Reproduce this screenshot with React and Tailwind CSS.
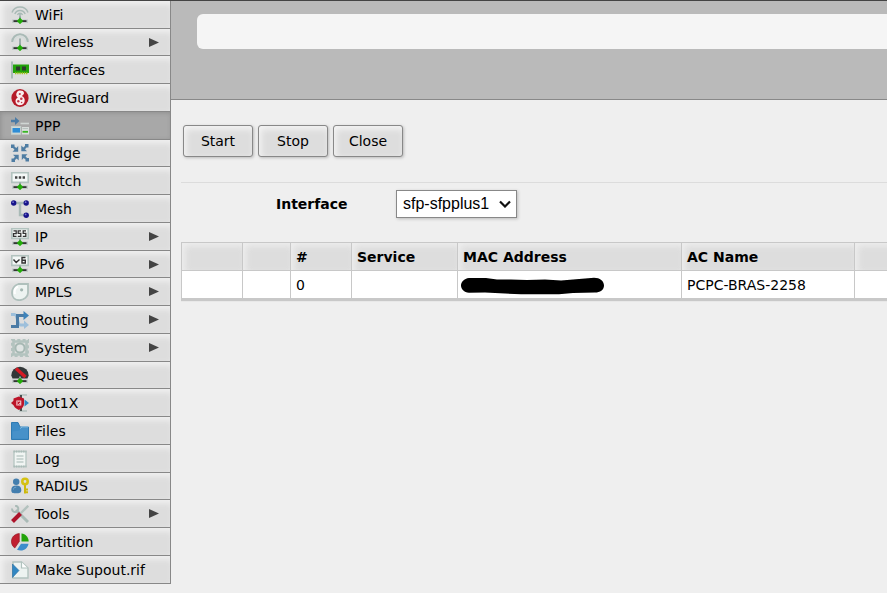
import React from 'react';

const Plug = () => (
  <g>
    <path d="M1 13.5h16v3.500h-16z" fill="#9db0ac" opacity=".45" />
    <path d="M2.500 14.200h13v1.800h-13z" fill="#333" />
    <path d="M8 10.500h2v2.500h-2z" fill="#8fa39f" />
    <path d="M9 11.800l3.200 3.200-3.200 3.200-3.200-3.200z" fill="#22ad08" />
  </g>
);

const Screen = ({ children }) => (
  <g>
    <path d="M.8.8h16.4v9.6h-16.4z" fill="#f4f8f7" stroke="#b3c3bf" strokeWidth="1.6" />
    {children}
    <Plug />
  </g>
);

const icons = {
  wifi: (
    <g>
      <g fill="none" stroke="#a9bab6" strokeWidth="1.400">
        <path d="M1 6.500a8.600 8.600 0 0 1 16 0" />
        <path d="M3.800 8a5.600 5.600 0 0 1 10.400 0" />
        <path d="M6.500 9a2.700 2.700 0 0 1 5 0" />
        <path d="M9 8v5" strokeWidth="1.800" />
      </g>
      <Plug />
    </g>
  ),
  wireless: (
    <g>
      <path d="M1.200 9a7.800 7.800 0 0 1 15.600 0" fill="none" stroke="#a9bab6" strokeWidth="2" />
      <path d="M3.500 9a5.500 5.500 0 0 1 11 0" fill="none" stroke="#d3dcda" strokeWidth="1.400" />
      <path d="M8 5.500h2v7h-2z" fill="#9caeaa" />
      <Plug />
    </g>
  ),
  interfaces: (
    <g>
      <path d="M1 .5v17" stroke="#a9bab6" strokeWidth="2" />
      <path d="M2 3.500h16v8.500h-16z" fill="#22a30a" />
      <path d="M5 5.500h4v4h-4zM11 5.500h4v4h-4z" fill="#2e3b2e" />
      <path d="M4 12.300h13" stroke="#9fc41c" strokeWidth="2" strokeDasharray="1.400 .8" />
    </g>
  ),
  wireguard: (
    <g>
      <ellipse cx="9" cy="9" rx="8.600" ry="8.900" fill="#b51a28" />
      <path
        d="M7 2c2.500-1 6-.4 6 2 0 1.600-1.400 2.400-2.300 3 2 .8 3 2.400 3 4.500 0 3-2.200 4.700-4.700 4.700-2.700 0-4.500-1.700-4.500-4 0-1.800.9-3 2.300-3.800-1.300-1-1.800-2-1.500-3.400.3-1.400 1-2.500 1.700-3z"
        fill="#f9edee"
      />
      <circle cx="8.800" cy="5" r="1.100" fill="#c3394a" />
      <circle cx="10.300" cy="9.800" r="1.300" fill="#c3394a" />
      <circle cx="7.300" cy="12.300" r="1.200" fill="#c3394a" />
      <circle cx="10.600" cy="13.500" r=".8" fill="#c3394a" />
    </g>
  ),
  ppp: (
    <g>
      <path d="M0 2.800h4v-2.800l4.500 4-4.500 4v-2.800h-4z" fill="#4b7ba5" />
      <path d="M9.500 6.500h8.500" stroke="#d0d6d4" strokeWidth="1.600" />
      <path d="M.6 9.600h9v7.600h-9z" fill="#d5dcda" stroke="#c3cfcc" strokeWidth="1.200" />
      <path d="M1.500 11h7.500v4.600h-7.500z" fill="#2d8dd6" />
      <path d="M11 10h7v7.500h-7z" fill="#d9dedc" />
      <path d="M11.500 14.800h5.500" stroke="#38b522" strokeWidth="1.800" />
      <path d="M11.500 11.500h5.500" stroke="#b7c3bf" />
    </g>
  ),
  bridge: (
    <g fill="#4f7da3">
      {[0, 90, 180, 270].map((a) => (
        <path key={a} transform={'rotate(' + a + ' 9 9)'} d="M0 .5h3.500v2l1.800 1.500 1.900-2v5.700h-5.700l2-2-1.500-1.700h-2z" />
      ))}
    </g>
  ),
  switch: (
    <Screen>
      <path d="M4 4.300h2.400v2.400h-2.400zM7.800 4.300h2.400v2.400h-2.400zM11.600 4.300h2.400v2.400h-2.400z" fill="#444" />
    </Screen>
  ),
  mesh: (
    <g>
      <path d="M3 3h12M9 3v12h6" fill="none" stroke="#a9bab6" strokeWidth="2.400" />
      {[[2.7, 3], [15.2, 3], [15.2, 15.2]].map(([x, y]) => (
        <g key={x + '-' + y}>
          <circle cx={x} cy={y} r="2.700" fill="#17148a" />
          <circle cx={x - 0.6} cy={y - 0.8} r=".9" fill="#7673ce" />
        </g>
      ))}
    </g>
  ),
  ip: (
    <Screen>
      <path d="M2.500 2.800h2.700v2.800h-2.700v2.800h3M10 2.800h-2.800v2.500h2.600v3.100h-3M15 2.800h-2.800v2.500h2.600v3.100h-3" fill="none" stroke="#333" strokeWidth="1.300" />
    </Screen>
  ),
  ipv6: (
    <Screen>
      <path d="M2.500 4.500l2.700 3 3.300-3M14.500 2.500h-3.500v5.500h3.300v-2.800h-3.300" fill="none" stroke="#333" strokeWidth="1.400" />
    </Screen>
  ),
  mpls: (
    <g>
      <path d="M7.500 1h9.500v9c0 3.500-4 7.200-8.500 7.200-4.800 0-7.500-3-7.500-7.200 0-4 2.500-7.500 6.500-9z" fill="#edf3f1" stroke="#afc0bc" strokeWidth="1.800" />
      <path d="M7 3.500c-3 1.500-4 4.500-3 7.500" fill="none" stroke="#fff" strokeWidth="2" />
      <circle cx="10.600" cy="6.800" r="1.600" fill="#a3b6b1" />
    </g>
  ),
  routing: (
    <g fill="none">
      <path d="M0 3.500h3.500c3.500 0 2.500 10.500 6 10.500h4" stroke="#9dbfdb" strokeWidth="3" />
      <path d="M13 9.500l5 4.500-5 4z" fill="#9dbfdb" />
      <path d="M0 15.500h6.500v-11h7" stroke="#4b7ba5" strokeWidth="3" />
      <path d="M12.500 0l5.500 4.500-5.500 4.500z" fill="#3f83ba" />
    </g>
  ),
  system: (
    <g fill="none" stroke="#b3c3bf">
      <path d="M2.500 2.500h13v13h-13z" strokeWidth="2.600" />
      <path d="M1 1h16v16h-16z" strokeWidth="2" strokeDasharray="3 2.300" />
      <circle cx="9" cy="9" r="4.600" fill="#dfe4e3" strokeWidth="2" stroke="#a6b8b3" />
    </g>
  ),
  queues: (
    <g>
      <path d="M.3 9.500a8.700 8.700 0 1 1 17.400 0l-1.200 3h-15z" fill="#333839" />
      <path d="M5 2.500l9.500 8.500" stroke="#d51a24" strokeWidth="3.400" />
      <Plug />
    </g>
  ),
  dot1x: (
    <g>
      <path d="M16 1h-7v16h7" fill="none" stroke="#b3c0bd" strokeWidth="1.600" />
      <path d="M10 1v16" stroke="#485150" strokeWidth="2" />
      <path d="M0 9l4-3.500v7z" fill="#b51a28" />
      <path d="M13.500 5.500l4.500 3.500-4.500 3.500z" fill="#3187c2" />
      <path d="M2.500 4.500l5.300-2 5.200 2v5.500c0 2.500-2 4.500-5.200 6-3.200-1.500-5.300-3.500-5.300-6z" fill="#bd1429" />
      <path d="M5.300 6.500h5v5h-5z" fill="#f2c7cc" />
      <path d="M6.500 7.700l2.600 2.600M9.100 7.700l-2.600 2.600" stroke="#bd1429" strokeWidth="1.200" />
    </g>
  ),
  files: (
    <g>
      <path d="M.5.500h6.500l2 4.500h8.500v12.500h-17z" fill="#3d8bc5" stroke="#2f7ab2" />
      <path d="M1.500 16.500v-7l7-1 2-2.500h6.500v10.500z" fill="#4791c9" />
      <path d="M9 6.500l2-1.500h6" fill="none" stroke="#8bc1e6" />
    </g>
  ),
  log: (
    <g>
      <path d="M3 1.500h12v15h-12z" fill="#f1f5f3" stroke="#b9c8c4" strokeWidth="1.400" />
      <path d="M2.500 1.500h13M2.500 16.500h13" stroke="#aabbb7" strokeWidth="2" strokeDasharray="1.400 1" />
      <path d="M5.500 6h7M5.500 9h7M5.500 12h7" stroke="#a6b7b3" strokeWidth="1.200" />
    </g>
  ),
  radius: (
    <g>
      <circle cx="5.200" cy="4.800" r="3.200" fill="#437eae" />
      <path d="M.3 13c0-3.200 1.800-4.500 5-4.500s5 1.300 5 4.500-2 3.300-5 3.300-5 0-5-3.300z" fill="#437eae" />
      <path d="M2.500 12.500c0-1.600 1-2.300 2.700-2.300" fill="none" stroke="#75a8ce" />
      <path d="M14 7v9.500M14 12.500h3M14 15.200h3" stroke="#cdb90b" strokeWidth="2" />
      <circle cx="14" cy="4.500" r="2.700" fill="none" stroke="#d5c112" strokeWidth="2.600" />
    </g>
  ),
  tools: (
    <g fill="none">
      <path d="M5 5l12 12" stroke="#a9bab6" strokeWidth="3" />
      <path d="M1 3.500c0 3 2 4 4.500 3.200l1.600-1.700c.6-2.300-.5-4-3-4.300" stroke="#a9bab6" strokeWidth="2" />
      <path d="M17.300.7l-8.300 8.300" stroke="#b3c2be" strokeWidth="2.400" />
      <path d="M9.500 8.500l-8 8" stroke="#ad142b" strokeWidth="4" />
    </g>
  ),
  partition: (
    <g>
      <path d="M8.300.5v8l-4.500 6.500c-5.500-4-4.500-13.500 4.500-14.500z" fill="#c01f30" stroke="#8e1420" strokeWidth=".6" />
      <path d="M10.500.5c4 .2 7 3.500 7.200 8h-7.200z" fill="#22a30a" />
      <path d="M10 10.800h7.500c-1 5.500-6 8.200-11.500 6z" fill="#3c8dcb" />
    </g>
  ),
  supout: (
    <g>
      <path d="M2 1h8.500l6.500 6v10h-15z" fill="#edf3f1" stroke="#b1c2be" strokeWidth="1.400" />
      <path d="M10.500 1v6h6" fill="#fff" stroke="#b1c2be" strokeWidth="1.200" />
      <path d="M1.500 3l6.500 6.500-6.500 7z" fill="#3187c2" stroke="#246c9f" strokeWidth=".6" />
    </g>
  ),
};

const menu = [
  ['WiFi', 'wifi'],
  ['Wireless', 'wireless', true],
  ['Interfaces', 'interfaces'],
  ['WireGuard', 'wireguard'],
  ['PPP', 'ppp'],
  ['Bridge', 'bridge'],
  ['Switch', 'switch'],
  ['Mesh', 'mesh'],
  ['IP', 'ip', true],
  ['IPv6', 'ipv6', true],
  ['MPLS', 'mpls', true],
  ['Routing', 'routing', true],
  ['System', 'system', true],
  ['Queues', 'queues'],
  ['Dot1X', 'dot1x'],
  ['Files', 'files'],
  ['Log', 'log'],
  ['RADIUS', 'radius'],
  ['Tools', 'tools', true],
  ['Partition', 'partition'],
  ['Make Supout.rif', 'supout'],
];

function Sidebar() {
  return (
    <nav className="w-[171px] shrink-0 self-start border-r border-[#888]">
      <ul>
        {menu.map(([label, icon, sub]) => (
          <li key={label} className="h-7 nth-[4n+2]:h-[27px]">
            <a
              href="#"
              aria-current={label === 'PPP' ? 'page' : undefined}
              className={
                'flex h-full items-center border-b border-[#888] pl-[11px] pr-[11px] ' +
                (label === 'PPP'
                  ? 'bg-[#a8a8a8] shadow-[inset_1px_1px_4px_#909090]'
                  : 'bg-[#dddddd] shadow-[inset_3px_3px_6px_#f2f2f2]')
              }
            >
              <svg viewBox="0 0 18 18" className="size-[18px] shrink-0" aria-hidden="true">
                {icons[icon]}
              </svg>
              <span className="ml-1.5 grow whitespace-nowrap">{label}</span>
              {sub && (
                <svg viewBox="0 0 10 9" className="h-[9px] w-2.5" aria-hidden="true">
                  <path d="M0 0l10 4.500-10 4.500z" fill="#444" />
                </svg>
              )}
            </a>
          </li>
        ))}
      </ul>
    </nav>
  );
}

const columns = ['', '', '#', 'Service', 'MAC Address', 'AC Name', ''];

const Redacted = () => (
  <svg viewBox="0 0 143 18" className="-ml-0.5 mt-0.5 block h-[18px] w-[143px]" role="img" aria-label="Hidden MAC address">
    <path
      d="M8 1L25 1 36 2.500 50 2.500 66 3 84 2.500 100 3.500 118 2 133 .7C139 .7 143 4 143 8.500 143 13 139 15.500 134 15.500L112 16 98 17.300 60 17.300 44 16.500 24 15.500 8 15.700C3 15.500 0 12 0 8.500 0 5 3 1.500 8 1Z"
      fill="#000"
    />
  </svg>
);

export default function App() {
  return (
    <div className="flex min-h-screen overflow-hidden border-t border-[#444] bg-[#efefef] font-['Verdana','DejaVu_Sans',sans-serif] text-sm text-black">
      <Sidebar />
      <div className="min-w-0 grow">
        <header className="h-[99px] border-b border-[#888] bg-[#bababa] pl-[26px] pt-[13px]">
          <div className="h-[35px] rounded-l-md bg-[#f5f5f5]" />
        </header>
        <main className="pl-2.5 pt-[25px]">
          <div className="flex gap-[5px] pl-0.5">
            {['Start', 'Stop', 'Close'].map((name) => (
              <button
                key={name}
                type="button"
                className="h-8 w-[70px] rounded-[3px] border border-[#888] bg-[#dddddd] shadow-[inset_2px_3px_6px_#f5f5f5,1px_1px_3px_#bbb]"
              >
                {name}
              </button>
            ))}
          </div>
          <form className="mt-[25px] flex items-center border-t border-[#dcdcdc] pt-[7px]">
            <label htmlFor="interface" className="w-[215px] pl-[95px] font-bold">
              Interface
            </label>
            <div className="relative">
              <select
                id="interface"
                className="block h-7 w-[121px] appearance-none border border-[#888] bg-white pl-1.5 font-['Liberation_Sans',Arial,sans-serif] text-base leading-6 shadow-[1px_1px_3px_#bbb]"
              >
                <option>sfp-sfpplus1</option>
              </select>
              <svg viewBox="0 0 12 8" className="pointer-events-none absolute right-1.5 top-2.5 h-2 w-3" aria-hidden="true">
                <path d="M1 1.500l5 5 5-5" fill="none" stroke="#111" strokeWidth="2.200" />
              </svg>
            </div>
          </form>
          <div className="mt-6 overflow-hidden pb-2">
            <table className="w-[780px] table-fixed border-collapse bg-white shadow-[0_2px_1px_#c8c8c8]">
              <colgroup>
                <col className="w-[61px]" />
                <col className="w-12" />
                <col className="w-[61px]" />
                <col className="w-[106px]" />
                <col className="w-56" />
                <col className="w-[173px]" />
                <col />
              </colgroup>
              <thead>
                <tr className="h-7">
                  {columns.map((c, i) => (
                    <th
                      key={i}
                      className="border border-[#c8c8c8] bg-[#dddddd] px-[5px] text-left font-bold shadow-[inset_3px_3px_6px_#eeeeee]"
                    >
                      {c}
                    </th>
                  ))}
                </tr>
              </thead>
              <tbody>
                <tr className="h-7">
                  {['', '', '0', '', <Redacted key="mac" />, 'PCPC-BRAS-2258', ''].map((c, i) => (
                    <td key={i} className="whitespace-nowrap border border-[#c8c8c8] px-[5px]">
                      {c}
                    </td>
                  ))}
                </tr>
              </tbody>
            </table>
          </div>
        </main>
      </div>
    </div>
  );
}
